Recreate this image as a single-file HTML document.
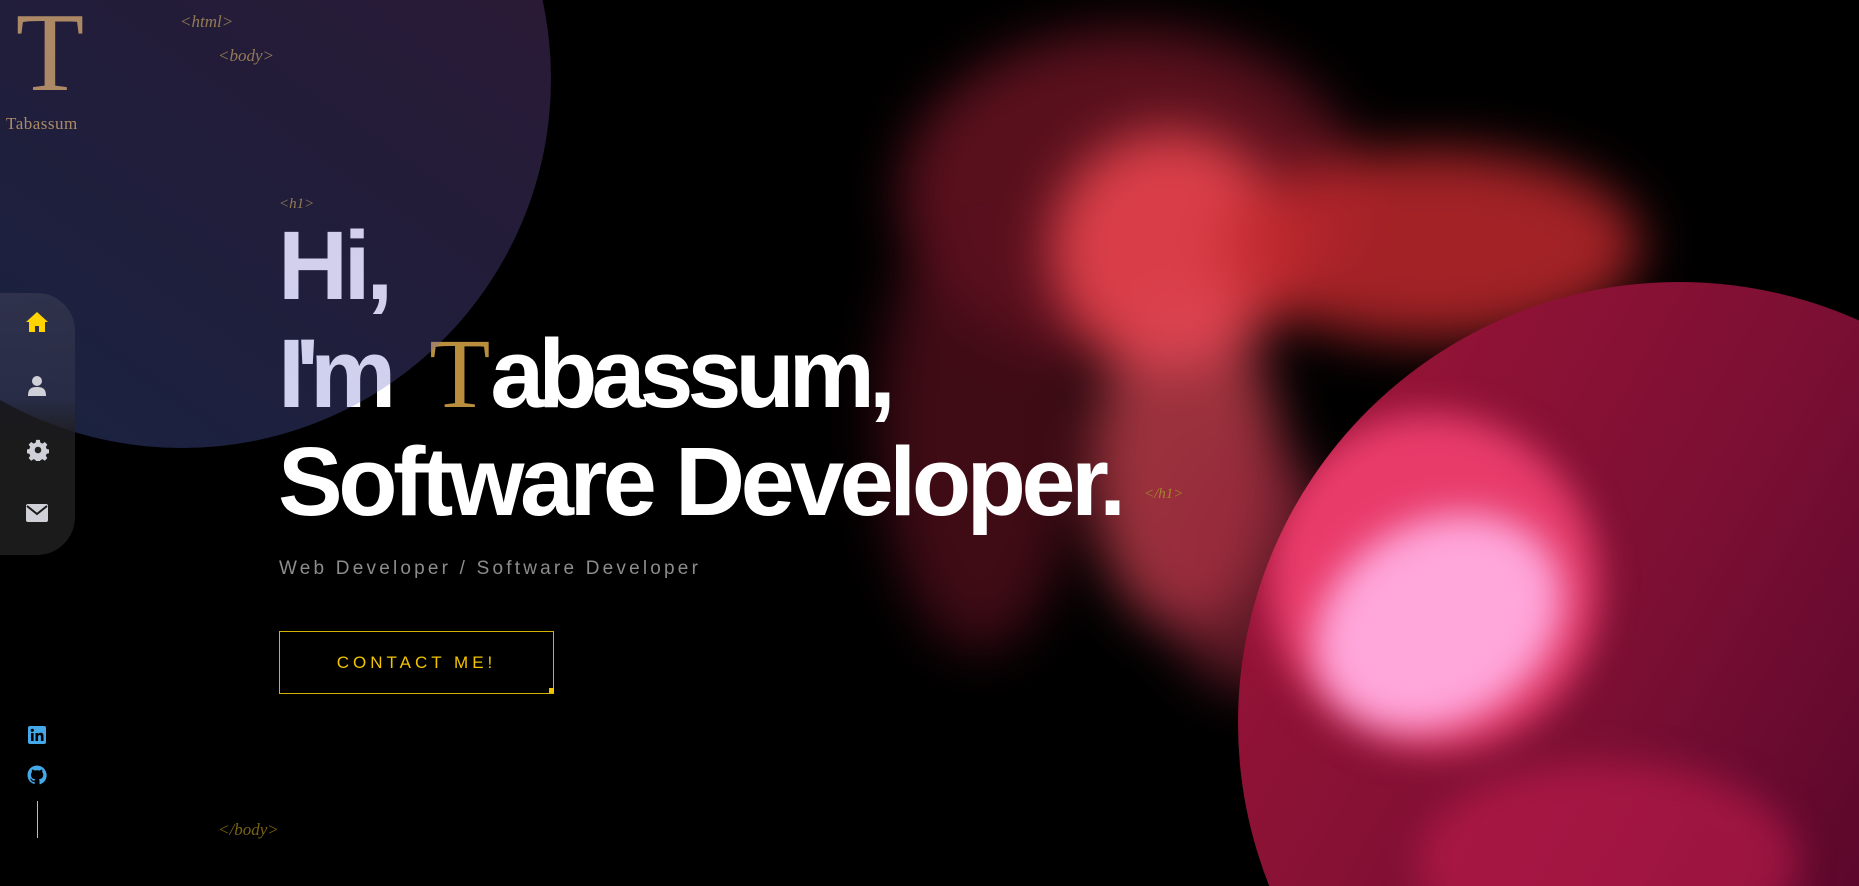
<!DOCTYPE html>
<html><head><meta charset="utf-8"><style>
html,body{margin:0;padding:0;width:1859px;height:886px;max-height:886px;overflow:hidden;background:#000;font-family:"Liberation Sans",Arial,sans-serif;}
#wrap{position:fixed;left:0;top:0;width:1859px;height:886px;overflow:hidden;clip-path:inset(0);background:#000;contain:strict;}
.abs{position:absolute;}
.blob{position:absolute;border-radius:50%;}
.tag{position:absolute;font-family:"Liberation Serif",serif;font-style:italic;color:#a3852a;font-size:17px;}
h1{position:absolute;left:278px;top:212px;margin:0;font-size:97px;line-height:108px;font-weight:bold;color:#fff;letter-spacing:-4.4px;white-space:nowrap;}
</style></head><body><div id="wrap">
<!-- smoke -->
<div class="abs" style="left:0;top:0;width:1859px;height:886px;filter:blur(26px);">
  <div class="blob" style="left:900px;top:30px;width:460px;height:330px;background:rgba(110,20,35,0.8);"></div>
  <div class="blob" style="left:880px;top:200px;width:200px;height:450px;background:rgba(90,15,30,0.7);"></div>
  <div class="blob" style="left:1050px;top:130px;width:240px;height:240px;background:rgba(240,70,80,0.85);"></div>
  <div class="blob" style="left:1220px;top:150px;width:420px;height:190px;background:rgba(190,40,45,0.85);"></div>
  <div class="blob" style="left:1090px;top:300px;width:190px;height:330px;background:rgba(220,70,85,0.7);"></div>
  <div class="blob" style="left:1160px;top:440px;width:180px;height:250px;background:rgba(150,40,60,0.6);"></div>
</div>
<!-- pink circle -->
<div class="abs" style="left:1238px;top:282px;width:882px;height:604px;overflow:hidden;">
<div class="blob" style="left:0;top:0;width:882px;height:882px;background:linear-gradient(120deg,#a01538 0%,#7a0f33 45%,#4e0428 80%);overflow:hidden;">
  <div class="abs" style="left:0;top:0;width:882px;height:882px;filter:blur(18px);">
    <div class="blob" style="left:30px;top:130px;width:330px;height:340px;background:rgba(255,70,120,0.8);transform:rotate(-30deg);"></div>
    <div class="blob" style="left:70px;top:240px;width:260px;height:200px;background:#ffa6da;transform:rotate(-30deg);"></div>
    <div class="blob" style="left:180px;top:480px;width:380px;height:200px;background:rgba(200,30,80,0.55);"></div>
  </div>
</div>
</div>
<!-- logo -->
<div class="abs" style="left:15px;top:-2px;width:70px;font-family:'Liberation Serif',serif;color:#c99a3e;font-size:112px;line-height:110px;text-align:center;">T</div>
<div class="abs" style="left:6px;top:114px;font-family:'Liberation Serif',serif;color:#c99a3e;font-size:17px;letter-spacing:0.5px;">Tabassum</div>
<div class="tag" style="left:180px;top:12px;">&lt;html&gt;</div>
<div class="tag" style="left:218px;top:46px;">&lt;body&gt;</div>
<div class="tag" style="left:279px;top:196px;font-size:15px;">&lt;h1&gt;</div>
<div class="tag" style="left:1144px;top:486px;font-size:15px;">&lt;/h1&gt;</div>
<div class="tag" style="left:218px;top:820px;color:#7a6414;">&lt;/body&gt;</div>
<h1>Hi,<br><span style="letter-spacing:-9px">I'm</span><span style="font-family:'Liberation Serif',serif;font-weight:normal;color:#b98f3e;font-size:100px;letter-spacing:0;margin-left:42px;">T</span><span style="letter-spacing:-6px">abassum,</span><br>Software Developer.</h1>
<div class="abs" style="left:279px;top:558px;color:#8c8c8c;font-size:19px;letter-spacing:3.2px;">Web Developer / Software Developer</div>
<div class="abs" style="left:279px;top:631px;width:273px;height:61px;border:1.5px solid #d4b000;color:#f2c400;font-size:17px;letter-spacing:4px;text-align:center;line-height:61px;">CONTACT ME!</div>
<div class="abs" style="left:549px;top:688px;width:5px;height:5px;background:#f2c400;"></div>
<!-- circle overlay -->
<div class="blob" style="left:-187px;top:-290px;width:738px;height:738px;background:linear-gradient(215deg,rgba(165,80,170,0.3) 0%,rgba(110,95,190,0.3) 50%,rgba(80,120,225,0.3) 100%);"></div>
<!-- sidebar -->
<div class="abs" style="left:0;top:293px;width:75px;height:262px;border-radius:0 38px 38px 0;background:linear-gradient(180deg,rgba(70,70,90,0.45) 0%,rgba(60,60,80,0.4) 40%,#1b1b1b 58%,#1b1b1b 100%);"></div>
<svg class="abs" style="left:25px;top:311px" width="24" height="22" viewBox="0 0 24 22"><path d="M12 1 L23 11 H20 V21 H14 V15 H10 V21 H4 V11 H1 Z" fill="#ffd400"/></svg>
<svg class="abs" style="left:27px;top:375px" width="20" height="22" viewBox="0 0 20 22"><circle cx="10" cy="6" r="5" fill="#d0d0d8"/><path d="M1 21 C1 14 4 12 10 12 C16 12 19 14 19 21 Z" fill="#d0d0d8"/></svg>
<svg class="abs" style="left:27px;top:439px" width="22" height="22" viewBox="0 0 24 24"><path fill="#d0d0d8" d="M10 1h4l.6 3 2.2 1 2.6-1.7 2.8 2.8-1.7 2.6 1 2.2 3 .6v4l-3 .6-1 2.2 1.7 2.6-2.8 2.8-2.6-1.7-2.2 1-.6 3h-4l-.6-3-2.2-1-2.6 1.7-2.8-2.8 1.7-2.6-1-2.2-3-.6v-4l3-.6 1-2.2-1.7-2.6 2.8-2.8 2.6 1.7 2.2-1z"/><circle cx="12" cy="12" r="3.6" fill="#222"/></svg>
<svg class="abs" style="left:26px;top:504px" width="22" height="18" viewBox="0 0 22 18"><rect x="0" y="0" width="22" height="18" rx="2" fill="#d0d0d8"/><path d="M1 2 L11 10 L21 2" stroke="#1b1b1b" stroke-width="2" fill="none"/></svg>
<!-- social -->
<svg class="abs" style="left:28px;top:726px" width="18" height="18" viewBox="0 0 18 18"><rect width="18" height="18" rx="2" fill="#45a8e8"/><rect x="3" y="7" width="2.6" height="8" fill="#000"/><circle cx="4.3" cy="4.3" r="1.6" fill="#000"/><path d="M7.5 7h2.5v1.2c.5-.9 1.5-1.4 2.7-1.4 2 0 2.8 1.3 2.8 3.4V15h-2.6v-4.3c0-1-.3-1.7-1.2-1.7s-1.6.6-1.6 1.8V15H7.5z" fill="#000"/></svg>
<svg class="abs" style="left:27px;top:765px" width="20" height="21" viewBox="0 0 20 21"><path fill="#45a8e8" d="M10 0.5C4.7 0.5 0.5 4.7 0.5 10c0 4.2 2.7 7.7 6.5 9 .5.1.6-.2.6-.5v-1.7c-2.6.6-3.2-1.2-3.2-1.2-.4-1.1-1-1.4-1-1.4-.9-.6.1-.6.1-.6 1 .1 1.5 1 1.5 1 .8 1.5 2.2 1 2.7.8.1-.6.3-1 .6-1.2-2.1-.2-4.3-1-4.3-4.6 0-1 .4-1.9 1-2.5-.1-.3-.4-1.2.1-2.5 0 0 .8-.3 2.6 1 .8-.2 1.6-.3 2.4-.3s1.6.1 2.4.3c1.8-1.2 2.6-1 2.6-1 .5 1.3.2 2.2.1 2.5.6.7 1 1.5 1 2.5 0 3.6-2.2 4.4-4.3 4.6.3.3.6.9.6 1.8v2.7c0 .3.2.6.7.5 3.8-1.3 6.5-4.8 6.5-9C19.5 4.7 15.3.5 10 .5z"/></svg>
<div class="abs" style="left:37px;top:801px;width:1px;height:37px;background:#bbb;"></div>
</div></body></html>
